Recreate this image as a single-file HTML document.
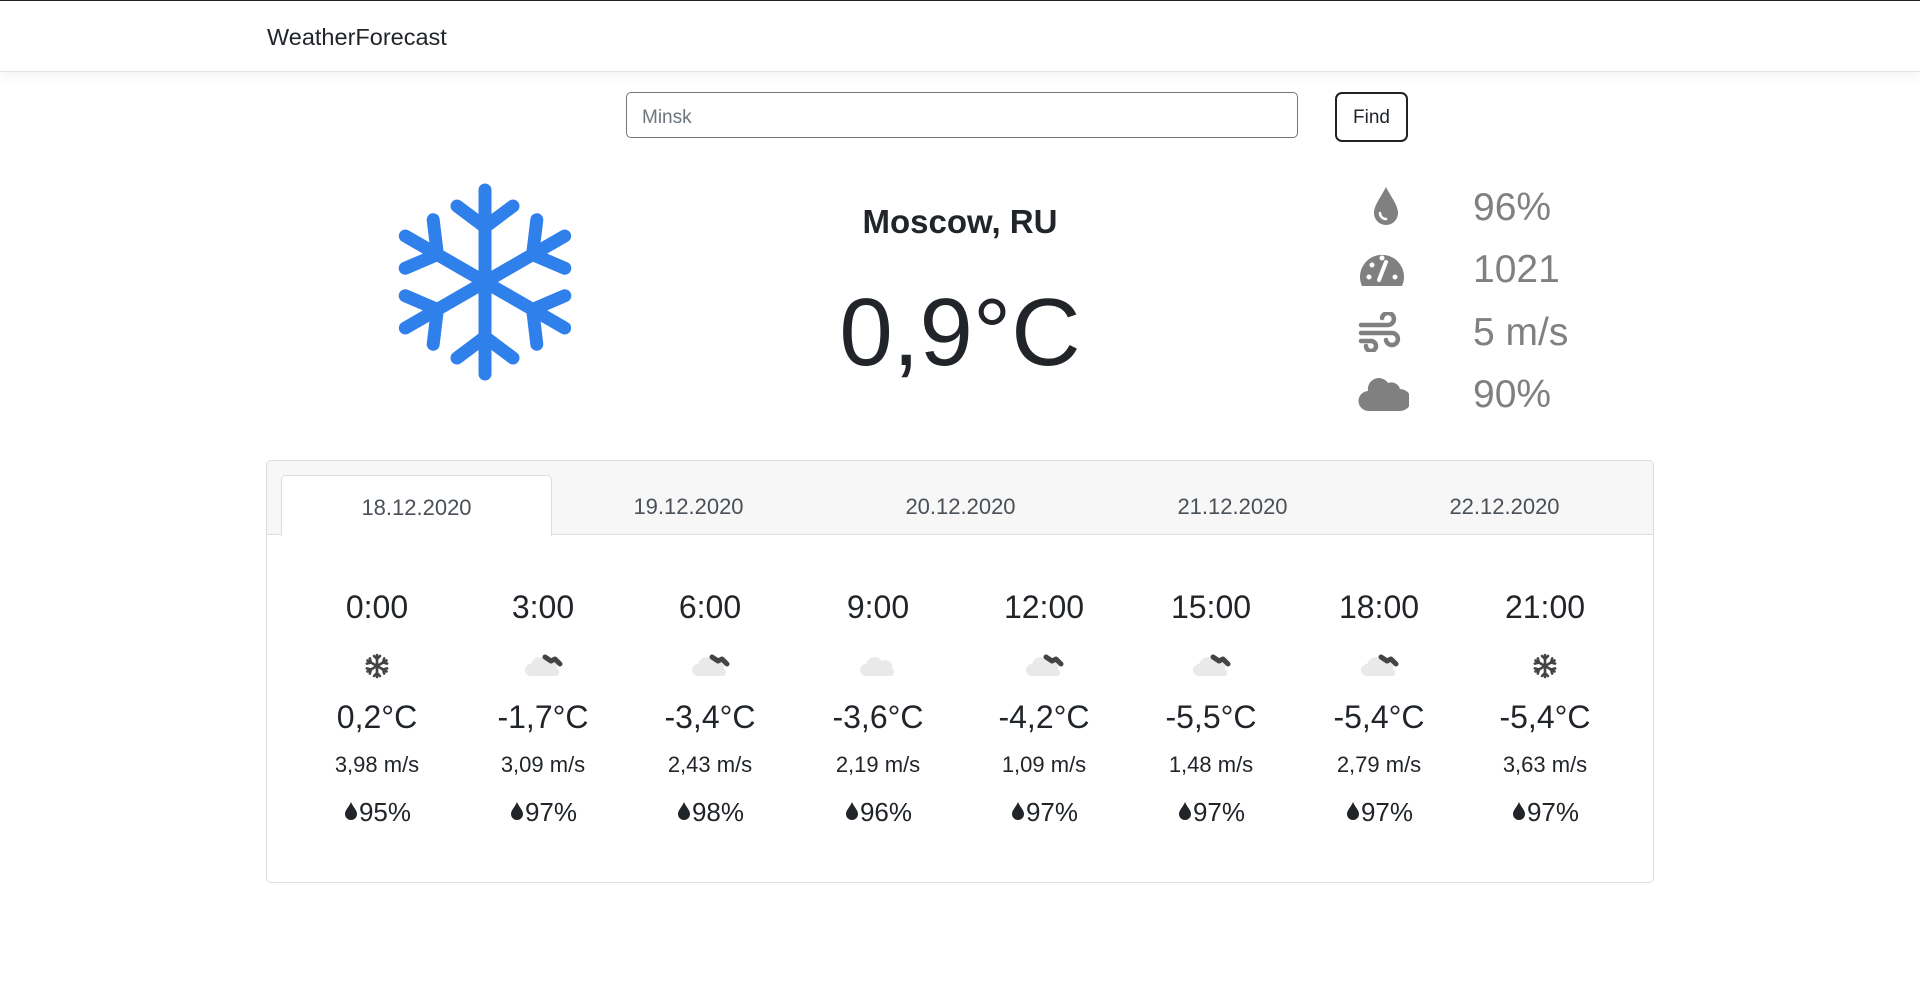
<!DOCTYPE html>
<html><head><meta charset="utf-8"><style>
*{box-sizing:border-box;margin:0;padding:0}
body{width:1920px;height:993px;background:#fff;font-family:"Liberation Sans",sans-serif;color:#212529;position:relative;overflow:hidden}
.nav{position:absolute;left:0;top:0;width:1920px;height:72px;border-top:1px solid #222;border-bottom:1px solid #e3e3e3;box-shadow:0 4px 12px rgba(0,0,0,.05)}
.brand{position:absolute;left:267px;top:23px;font-size:23.5px;color:#212529}
.inp{position:absolute;left:626px;top:92px;width:672px;height:46px;border:1px solid #777;border-radius:5px;font-size:19px;color:#6c757d;padding:14px 15px 0}
.btn{position:absolute;left:1335px;top:92px;width:73px;height:50px;border:2px solid #222;border-radius:7px;font-size:19px;text-align:center;line-height:48px}
.abs{position:absolute}
.c{text-align:center}
.stat{position:absolute;left:1473px;font-size:39px;color:#808080}
.card{position:absolute;left:266px;top:460px;width:1388px;height:423px;border:1px solid #ddd;border-radius:5px;overflow:hidden}
.hdr{position:absolute;left:0;top:0;width:100%;height:74px;background:#f7f7f7;border-bottom:1px solid #ddd}
.tab{position:absolute;top:14px;width:271px;height:61px;font-size:22px;text-align:center;line-height:64px;color:#495057}
.tab.a{background:#fff;border:1px solid #ddd;border-bottom:none;border-radius:5px 5px 0 0;height:61px}
.col{position:absolute;width:166px;text-align:center}
.t{font-size:32px;top:128px}
.tp{font-size:32px;top:238px}
.w{font-size:22px;top:291px}
.h{font-size:26px;top:336px}
</style></head><body>
<div class="nav"><div class="brand">WeatherForecast</div></div>
<div class="inp">Minsk</div>
<div class="btn">Find</div>

<svg class="abs" style="left:385px;top:182px" width="200" height="200" viewBox="-100 -100 200 200">
<g stroke="#3080eb" stroke-width="13" stroke-linecap="round" fill="none">
<g id="arm"><path d="M0 0V-92M0-55L-28-76M0-55L28-76"/></g>
<use href="#arm" transform="rotate(60)"/><use href="#arm" transform="rotate(120)"/><use href="#arm" transform="rotate(180)"/><use href="#arm" transform="rotate(240)"/><use href="#arm" transform="rotate(300)"/>
</g></svg>

<div class="abs c" style="left:760px;width:400px;top:203px;font-size:33px;font-weight:bold">Moscow, RU</div>
<div class="abs c" style="left:660px;width:600px;top:278px;font-size:96px;font-weight:300">0,9°C</div>

<svg class="abs" style="left:1366px;top:185px" width="40" height="42" viewBox="0 0 40 42"><path d="M20 2C15 12 8 20 8 28a12 12 0 0 0 24 0c0-8-7-16-12-26z" fill="#808080"/><path d="M14 28a6 6 0 0 0 6 6" stroke="#fff" stroke-width="2.5" fill="none" stroke-linecap="round"/></svg>
<svg class="abs" style="left:1358px;top:246px" width="48" height="42" viewBox="0 0 48 42"><path d="M4 40A22 22 0 1 1 44 40Z" fill="#808080"/><circle cx="11" cy="31" r="2.5" fill="#fff"/><circle cx="14" cy="19" r="2.5" fill="#fff"/><circle cx="37" cy="31" r="2.5" fill="#fff"/><circle cx="24" cy="12" r="2.5" fill="#fff"/><path d="M21 34l7-18" stroke="#fff" stroke-width="4" stroke-linecap="round"/></svg>
<svg class="abs" style="left:1358px;top:312px" width="44" height="40" viewBox="0 0 44 40"><g stroke="#808080" stroke-width="4.5" fill="none" stroke-linecap="round"><path d="M3 13H30a6 6 0 1 0-6-7"/><path d="M3 21H34a6 6 0 1 1-6 7"/><path d="M3 29h10a5 5 0 1 1-5 5"/></g></svg>
<svg class="abs" style="left:1357px;top:373px" width="52" height="40" viewBox="0 0 52 40"><path d="M12 38a10 10 0 0 1-1-20 11 11 0 0 1 20-8 9 9 0 0 1 12 6 11 11 0 0 1 0 22z" fill="#808080"/></svg>

<div class="stat" style="top:186px">96%</div>
<div class="stat" style="top:248px">1021</div>
<div class="stat" style="top:311px">5 m/s</div>
<div class="stat" style="top:373px">90%</div>

<div class="card">
<div class="hdr"></div>
<div class="tab a" style="left:14px">18.12.2020</div>
<div class="tab" style="left:286px">19.12.2020</div>
<div class="tab" style="left:558px">20.12.2020</div>
<div class="tab" style="left:830px">21.12.2020</div>
<div class="tab" style="left:1102px">22.12.2020</div>

<svg width="0" height="0" style="position:absolute"><defs>
<g id="sn" stroke="#444" stroke-width="2.6" stroke-linecap="round"><g id="sa"><path d="M0 0V-11M0-7l-3-3M0-7l3-3"/></g><use href="#sa" transform="rotate(60)"/><use href="#sa" transform="rotate(120)"/><use href="#sa" transform="rotate(180)"/><use href="#sa" transform="rotate(240)"/><use href="#sa" transform="rotate(300)"/></g>
<g id="cl"><path d="M-14 10a6 6 0 0 1 0-12 9 9 0 0 1 16-3 7 7 0 0 1 10 8 4 4 0 0 1 0 7z" fill="#e9e9e9"/><path d="M0-9l6 4 4-2 5 5" stroke="#444" stroke-width="5" stroke-linecap="round" stroke-linejoin="round" fill="none"/></g>
<g id="cl2"><path d="M-14 10a6 6 0 0 1 0-12 9 9 0 0 1 16-3 7 7 0 0 1 10 8 4 4 0 0 1 0 7z" fill="#e9e9e9"/></g>
<path id="dr" d="M8 1C6 6 2 9 2 13a6 6 0 0 0 12 0c0-4-4-7-6-12z" fill="#212529"/>
</defs></svg>

<div class="col t" style="left:27px">0:00</div><div class="col t" style="left:193px">3:00</div><div class="col t" style="left:360px">6:00</div><div class="col t" style="left:528px">9:00</div><div class="col t" style="left:694px">12:00</div><div class="col t" style="left:861px">15:00</div><div class="col t" style="left:1029px">18:00</div><div class="col t" style="left:1195px">21:00</div>

<svg class="abs" style="left:0;top:187px" width="1388" height="36">
<use href="#sn" x="110" y="18"/>
<use href="#cl" x="278" y="18"/>
<use href="#cl" x="445" y="18"/>
<use href="#cl2" x="613" y="18"/>
<use href="#cl" x="779" y="18"/>
<use href="#cl" x="946" y="18"/>
<use href="#cl" x="1114" y="18"/>
<use href="#sn" x="1278" y="18"/>
</svg>

<div class="col tp" style="left:27px">0,2°C</div><div class="col tp" style="left:193px">-1,7°C</div><div class="col tp" style="left:360px">-3,4°C</div><div class="col tp" style="left:528px">-3,6°C</div><div class="col tp" style="left:694px">-4,2°C</div><div class="col tp" style="left:861px">-5,5°C</div><div class="col tp" style="left:1029px">-5,4°C</div><div class="col tp" style="left:1195px">-5,4°C</div>

<div class="col w" style="left:27px">3,98 m/s</div><div class="col w" style="left:193px">3,09 m/s</div><div class="col w" style="left:360px">2,43 m/s</div><div class="col w" style="left:528px">2,19 m/s</div><div class="col w" style="left:694px">1,09 m/s</div><div class="col w" style="left:861px">1,48 m/s</div><div class="col w" style="left:1029px">2,79 m/s</div><div class="col w" style="left:1195px">3,63 m/s</div>

<div class="col h" style="left:27px"><svg width="16" height="20" viewBox="0 0 16 20"><use href="#dr"/></svg>95%</div>
<div class="col h" style="left:193px"><svg width="16" height="20" viewBox="0 0 16 20"><use href="#dr"/></svg>97%</div>
<div class="col h" style="left:360px"><svg width="16" height="20" viewBox="0 0 16 20"><use href="#dr"/></svg>98%</div>
<div class="col h" style="left:528px"><svg width="16" height="20" viewBox="0 0 16 20"><use href="#dr"/></svg>96%</div>
<div class="col h" style="left:694px"><svg width="16" height="20" viewBox="0 0 16 20"><use href="#dr"/></svg>97%</div>
<div class="col h" style="left:861px"><svg width="16" height="20" viewBox="0 0 16 20"><use href="#dr"/></svg>97%</div>
<div class="col h" style="left:1029px"><svg width="16" height="20" viewBox="0 0 16 20"><use href="#dr"/></svg>97%</div>
<div class="col h" style="left:1195px"><svg width="16" height="20" viewBox="0 0 16 20"><use href="#dr"/></svg>97%</div>
</div>
</body></html>
